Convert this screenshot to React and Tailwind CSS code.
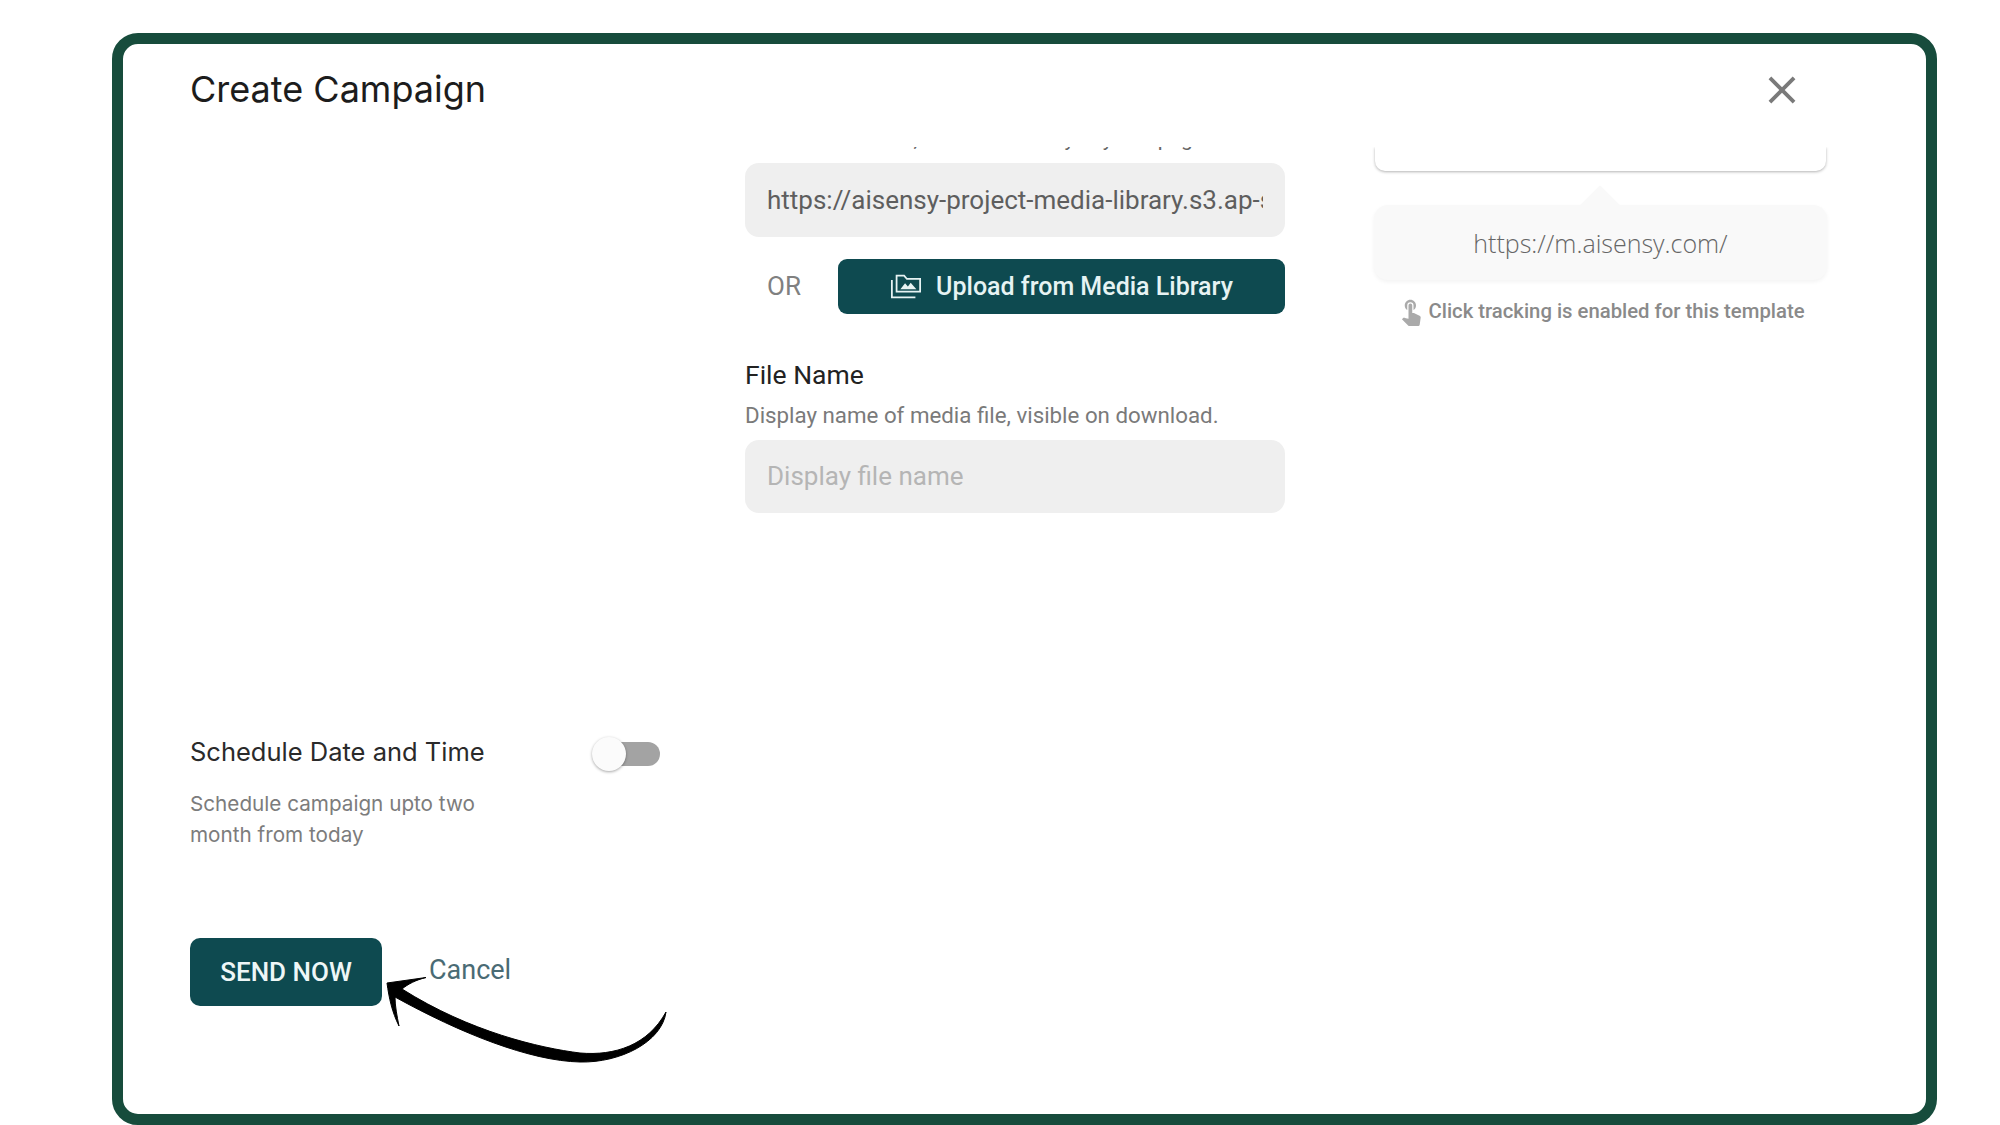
import { MdClose, MdTouchApp } from 'react-icons/md';

const roboto = "font-['Roboto',sans-serif]";

const MediaIcon = () => (
    <svg width="32" height="27" viewBox="0 0 34 28" fill="none" stroke="currentColor" strokeWidth="1.9">
        <path d="M7 2.5V19.5H32V6H18L15 2.5Z" />
        <path d="M2 7V25.5H27" />
        <path d="M11 17L16 10.5L19 14L22 10L28 17Z" fill="currentColor" stroke="none" />
    </svg>
);

const Arrow = () => (
    <svg width="520" height="205" viewBox="0 0 520 205" className="absolute left-[47px] top-[876px]">
        <path
            d="M217 63L256 57.5C246 60 238 64 232 69C300 112 370 128 410 133C445 136 478 125 496 92C492 122 450 143 410 142C360 141 290 113 225 77C225 86 227 96 229 106C222 92 219 78 217 63Z"
            fill="#000"
            stroke="#000"
            strokeWidth="1"
        />
    </svg>
);

export default function App() {
    return (
        <div className="min-h-screen bg-white pt-[33px] pl-[112px] pr-[63px]">
            <div className="relative flex h-[1092px] flex-col rounded-[26px] border-[11px] border-[#174c3c] bg-white">
                {/* Header */}
                <div className="flex h-[103px] shrink-0 items-center justify-between pb-[13px] pl-[67px] pr-[121px]">
                    <h1 className="font-['Inter',sans-serif] text-[36px] leading-none text-[#1c1c1c]">Create Campaign</h1>
                    <MdClose size={46} className="mt-[2px] text-[#7a7a7a]" />
                </div>

                <div className="flex flex-1 overflow-hidden">
                    {/* Left column */}
                    <div className="flex w-[622px] shrink-0 flex-col pl-[67px] pt-[586px]">
                        <div className="flex items-start justify-between pr-[85px]">
                            <p className="font-['Inter',sans-serif] text-[25.5px] leading-[38px] text-[#2a2a2a]">Schedule Date and Time</p>
                            <div className="relative mt-[9px] h-[24px] w-[56px] rounded-full bg-[#a3a3a3]">
                                <div className="absolute left-[-12px] top-[-5px] h-[34px] w-[34px] rounded-full bg-[#fbfbfb] shadow-[0_1px_3px_rgba(0,0,0,0.35)]" />
                            </div>
                        </div>
                        <p className="mt-[17px] font-['Inter',sans-serif] text-[20.7px] leading-[31px] text-[#7c7c7c]">
                            Schedule campaign upto two
                            <br />
                            month from today
                        </p>
                        <div className="mt-[88px] flex items-start">
                            <button className={`h-[68px] w-[192px] rounded-[10px] bg-[#0e4a50] text-[26px] font-medium text-[#eef7f7] ${roboto}`}>SEND NOW</button>
                            <span className={`ml-[47px] mt-[13px] text-[27px] leading-[38px] text-[#4a6b74] ${roboto}`}>Cancel</span>
                        </div>
                    </div>

                    {/* Media fields */}
                    <div className={`w-[540px] shrink-0 ${roboto}`}>
                        <div className="h-[3px] overflow-hidden">
                            <p className="mt-[-20px] whitespace-nowrap text-[21px] leading-[24px] text-[#666]">Add the media file, it can be sent by any one page</p>
                        </div>
                        <div className="mt-[13px] flex h-[74px] items-center rounded-[14px] bg-[#efefef] px-[22px]">
                            <span className="block overflow-hidden whitespace-nowrap text-[26px] text-[#5e5e5e]">https://aisensy-project-media-library.s3.ap-south-1.amazonaws.com</span>
                        </div>
                        <div className="mt-[22px] flex items-center">
                            <span className="w-[93px] pl-[22px] text-[26px] text-[#808080]">OR</span>
                            <button className="flex h-[55px] flex-1 items-center justify-center gap-[14px] rounded-[9px] bg-[#0e4a50] text-[25px] font-medium text-[#e6f3f3]">
                                <MediaIcon />
                                Upload from Media Library
                            </button>
                        </div>
                        <p className="mt-[44px] text-[26.5px] leading-[34px] text-[#222]">File Name</p>
                        <p className="mt-[7px] text-[22.3px] leading-[32px] text-[#7a7a7a]">Display name of media file, visible on download.</p>
                        <div className="mt-[9px] flex h-[73px] items-center rounded-[14px] bg-[#efefef] px-[22px] text-[26px] text-[#b5b5b5]">Display file name</div>
                    </div>

                    {/* Template preview */}
                    <div className="ml-[89px] w-[453px] shrink-0">
                        <div className="mx-[1px] h-[24px] rounded-b-[10px] bg-white shadow-[0_1px_3px_rgba(0,0,0,0.3)]" />
                        <div className="relative mt-[34px] flex h-[75px] items-center justify-center rounded-[14px] bg-[#f9f9f9] pt-[2px] font-['Open_Sans',sans-serif] text-[25px] font-light text-[#666] shadow-[0_2px_4px_rgba(0,0,0,0.05)]">
                            <div className="absolute left-[212px] top-[-14px] h-[28px] w-[28px] rotate-45 bg-[#f9f9f9]" />
                            <span className="relative">https://m.aisensy.com/</span>
                        </div>
                        <div className={`mt-[15px] flex items-center justify-center text-[20.3px] font-medium leading-[32px] text-[#8a8a8a] ${roboto}`}>
                            <MdTouchApp size={30} className="text-[#aaa]" />
                            <span className="ml-[2px]">Click tracking is enabled for this template</span>
                        </div>
                    </div>
                </div>

                <Arrow />
            </div>
        </div>
    );
}
